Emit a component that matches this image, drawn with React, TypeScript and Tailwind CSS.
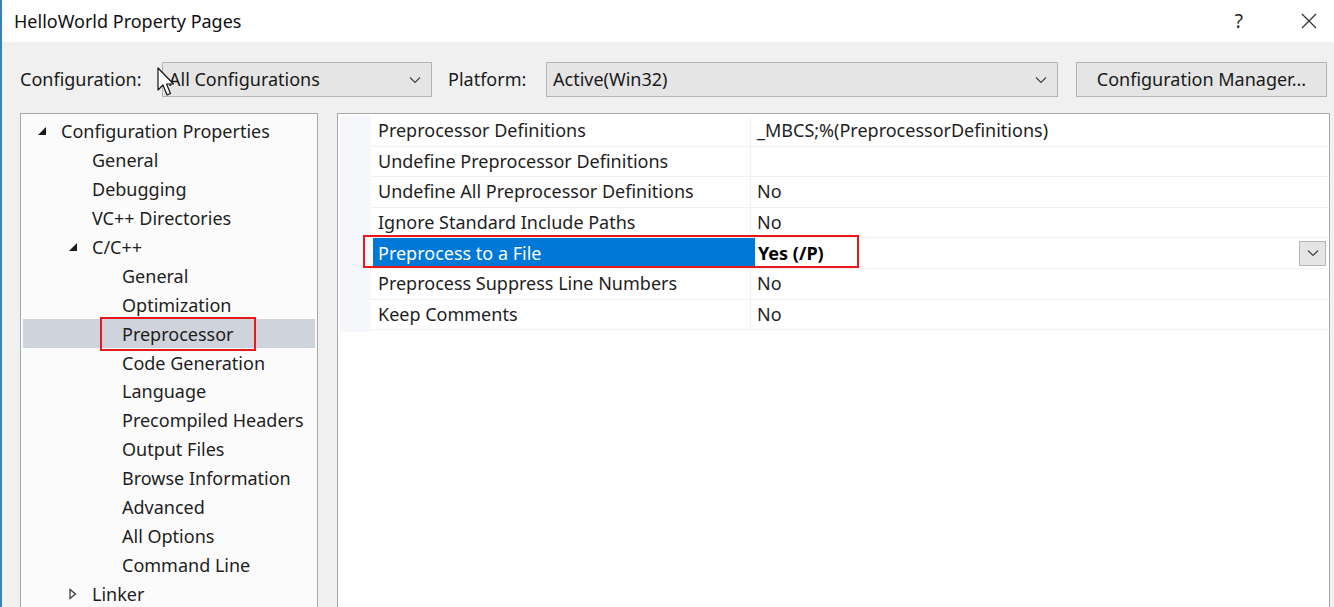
import React from "react";

const TREE = [
  { label: "Configuration Properties", level: 0, toggle: "open" },
  { label: "General", level: 1 },
  { label: "Debugging", level: 1 },
  { label: "VC++ Directories", level: 1 },
  { label: "C/C++", level: 1, toggle: "open" },
  { label: "General", level: 2 },
  { label: "Optimization", level: 2 },
  { label: "Preprocessor", level: 2, selected: true },
  { label: "Code Generation", level: 2 },
  { label: "Language", level: 2 },
  { label: "Precompiled Headers", level: 2 },
  { label: "Output Files", level: 2 },
  { label: "Browse Information", level: 2 },
  { label: "Advanced", level: 2 },
  { label: "All Options", level: 2 },
  { label: "Command Line", level: 2 },
  { label: "Linker", level: 1, toggle: "closed" },
];

const PROPS = [
  { name: "Preprocessor Definitions", value: "_MBCS;%(PreprocessorDefinitions)" },
  { name: "Undefine Preprocessor Definitions", value: "" },
  { name: "Undefine All Preprocessor Definitions", value: "No" },
  { name: "Ignore Standard Include Paths", value: "No" },
  { name: "Preprocess to a File", value: "Yes (/P)", selected: true },
  { name: "Preprocess Suppress Line Numbers", value: "No" },
  { name: "Keep Comments", value: "No" },
];

function Chevron({ className = "" }: { className?: string }) {
  return (
    <svg width="12" height="8" viewBox="0 0 12 8" className={className}>
      <path d="M1 1.5 L6 6.5 L11 1.5" fill="none" stroke="#444" strokeWidth="1.2" />
    </svg>
  );
}

function Select({ value, width }: { value: string; width: string }) {
  return (
    <div
      className={`${width} h-[35px] flex items-center justify-between pl-[6px] pr-[10px] bg-[#e5e5e5] border border-[#b4b4b4] text-[18px] text-[#1a1a1a]`}
    >
      <span>{value}</span>
      <Chevron />
    </div>
  );
}

function Toggle({ kind }: { kind?: string }) {
  if (kind === "open") {
    return (
      <svg width="10" height="10" viewBox="0 0 10 10">
        <path d="M9 1 L9 9 L1 9 Z" fill="#1a1a1a" />
      </svg>
    );
  }
  if (kind === "closed") {
    return (
      <svg width="10" height="12" viewBox="0 0 10 12">
        <path d="M2 1.5 L7.5 6 L2 10.5 Z" fill="none" stroke="#333" strokeWidth="1.2" />
      </svg>
    );
  }
  return null;
}

function Tree() {
  return (
    <div className="w-[298px] shrink-0 bg-[#fbfbfb] border border-[#a8a8a8] pt-[3px] px-[2px] overflow-hidden">
      {TREE.map((item, i) => {
        const pad = item.level === 0 ? "pl-[14px]" : item.level === 1 ? "pl-[45px]" : "pl-[75px]";
        return (
          <div
            key={i}
            className={`h-[28.9px] flex items-center ${pad} ${item.selected ? "bg-[#cfd3dc]" : ""}`}
          >
            <span className="w-[24px] h-full flex items-center shrink-0">
              <Toggle kind={item.toggle} />
            </span>
            <span
              className={`text-[18px] leading-none text-[#1e1e1e] whitespace-nowrap ${
                item.selected ? "outline-2 outline-[#e8191c] px-[20px] -mx-[20px] py-[6px]" : ""
              }`}
            >
              {item.label}
            </span>
          </div>
        );
      })}
    </div>
  );
}

function Grid() {
  return (
    <div className="flex-1 mr-[4px] bg-white border border-[#a8a8a8] flex pt-[2px] pl-[2px]">
      <div className="w-[31px] shrink-0 bg-[#f6f7fa] self-start h-[216px]" />
      <div className="flex-1 flex flex-col">
        {PROPS.map((p, i) => (
          <div
            key={i}
            className="h-[30.6px] flex items-stretch border-b border-[#f1f1f1] relative"
          >
            <div
              className={`w-[379px] shrink-0 flex items-center text-[18px] whitespace-nowrap ${
                p.selected ? "bg-[#0078d7] text-white ml-[2px] pl-[5px]" : "pl-[7px] text-[#1e1e1e]"
              }`}
            >
              {p.name}
            </div>
            <div
              className={`flex-1 flex items-center justify-between pr-[3px] text-[18px] border-l ${
                p.selected
                  ? "font-bold text-black border-l-[3px] border-l-[#0078d7] pl-[3px]"
                  : "pl-[6px] text-[#1e1e1e] border-[#f1f1f1]"
              }`}
            >
              <span>{p.value}</span>
              {p.selected && (
                <div className="w-[27px] h-[25px] bg-[#e5e5e5] border border-[#b4b4b4] flex items-center justify-center">
                  <Chevron />
                </div>
              )}
            </div>
            {p.selected && (
              <div className="absolute left-[-8px] top-[-3px] w-[496px] h-[33px] border-2 border-[#e8191c] pointer-events-none" />
            )}
          </div>
        ))}
      </div>
    </div>
  );
}

function Cursor() {
  return (
    <svg
      width="22"
      height="32"
      viewBox="0 0 22 32"
      className="absolute left-[155px] top-[67px]"
    >
      <path
        d="M1 1 L1 23 L6 18 L10 28 L13.5 26.5 L9.5 17 L16.5 17 Z"
        fill="#fff"
        stroke="#111"
        strokeWidth="1.2"
        strokeLinejoin="round"
      />
    </svg>
  );
}

export default function App() {
  return (
    <div className="relative w-[1334px] h-[607px] overflow-hidden bg-[#f0f0f0] border-l-2 border-[#3b7fbf] font-['Noto_Sans',sans-serif]">
      <div className="h-[42px] bg-white flex items-center justify-between pl-[12px] pr-[17px]">
        <span className="text-[18px] text-[#111]">HelloWorld Property Pages</span>
        <div className="flex items-center gap-[58px]">
          <span className="text-[19px] text-[#222]">?</span>
          <svg width="16" height="16" viewBox="0 0 16 16">
            <path d="M1 1 L15 15 M15 1 L1 15" stroke="#333" strokeWidth="1.3" />
          </svg>
        </div>
      </div>

      <div className="h-[71px] flex items-start pt-[20px] pl-[18px] text-[18px] text-[#1a1a1a]">
        <span className="h-[35px] flex items-center w-[142px]">Configuration:</span>
        <Select value="All Configurations" width="w-[270px]" />
        <span className="h-[35px] flex items-center ml-[16px] w-[98px]">Platform:</span>
        <Select value="Active(Win32)" width="w-[512px]" />
        <button className="ml-[18px] w-[251px] h-[35px] bg-[#e5e5e5] border border-[#b4b4b4] text-[18px] text-[#1a1a1a]">
          Configuration Manager...
        </button>
      </div>

      <div className="flex gap-[19px] pl-[18px] h-[500px]">
        <Tree />
        <Grid />
      </div>

      <Cursor />
    </div>
  );
}
